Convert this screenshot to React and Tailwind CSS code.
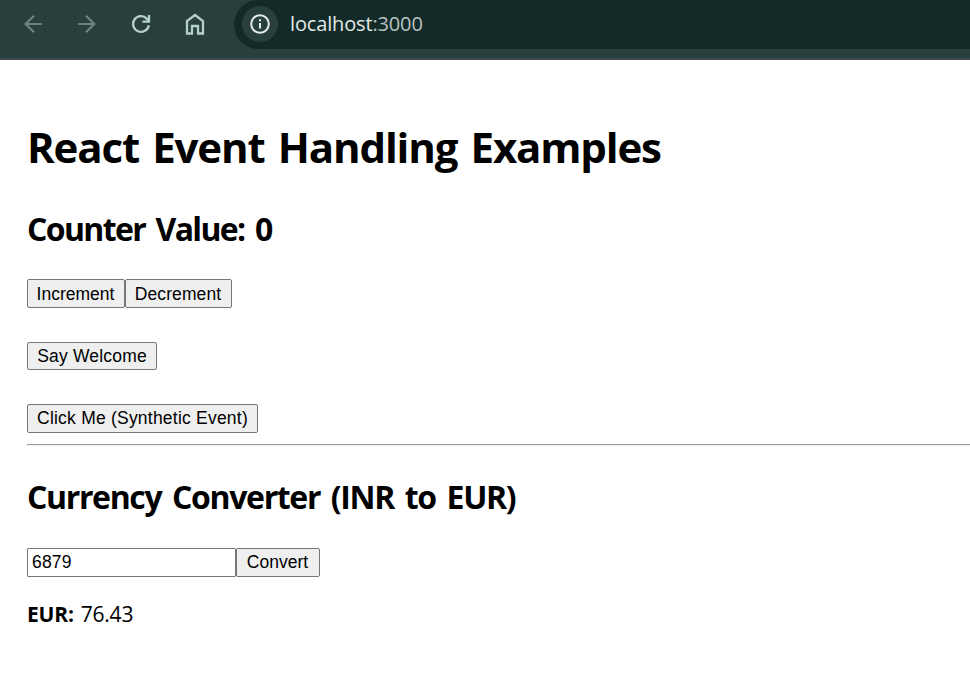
import { useState } from "react";

const buttonClass =
  "box-border flex items-center justify-center rounded-[2px] border border-[#767676] bg-[#efefef] font-['Liberation_Sans',Arial,sans-serif] text-[17.5px] leading-5 text-black whitespace-nowrap";

function BrowserBar() {
  return (
    <header className="flex h-[60px] items-start border-b-2 border-[#40494a] bg-[#28403d]">
      <nav className="flex h-12 w-[234px] shrink-0 items-center pl-[22px]">
        <svg className="mr-8 h-[22px] w-[22px]" viewBox="0 0 22 22" fill="none" stroke="#6d827e" strokeWidth="2.2">
          <path d="M20 11H3.5M12 2.7 3.7 11l8.3 8.3" />
        </svg>
        <svg className="mr-8 h-[22px] w-[22px]" viewBox="0 0 22 22" fill="none" stroke="#6d827e" strokeWidth="2.2">
          <path d="M2 11h16.5M10 2.7l8.3 8.3-8.3 8.3" />
        </svg>
        <svg className="mr-8 h-[22px] w-[22px]" viewBox="0 0 22 22" fill="none" stroke="#b5d0ca" strokeWidth="2.3">
          <path d="M18.8 12.2a7.9 7.9 0 1 1-2-6.6l2.4 2.6M19 2v6.6h-6.6" />
        </svg>
        <svg className="h-[22px] w-[22px]" viewBox="0 0 22 22" fill="none" stroke="#b5d0ca" strokeWidth="2.3">
          <path d="M3 20.5V8L11 2l8 6v12.5h-5V13H8v7.5z" />
        </svg>
      </nav>
      <div className="flex h-[49px] flex-1 items-center rounded-bl-[25px] rounded-tl-[25px] bg-[#122b28] pb-px pl-2">
        <div className="flex h-9 w-9 items-center justify-center rounded-full bg-[#28403d]">
          <svg className="h-[22px] w-[22px]" viewBox="0 0 22 22" fill="none" stroke="#e3ebe8" strokeWidth="2">
            <circle cx="11" cy="11" r="8.8" />
            <path d="M11 10v5.5M11 6.2v2.1" />
          </svg>
        </div>
        <div className="ml-3 pb-px font-['Open_Sans','Noto_Sans',sans-serif] text-[20px] leading-7 tracking-[-0.15px] text-[#e3e9e7]">
          localhost<span className="text-[#b9c3c0]">:3000</span>
        </div>
      </div>
    </header>
  );
}

export default function App() {
  const [count, setCount] = useState(0);
  const [amount, setAmount] = useState("6879");
  const [euros, setEuros] = useState("76.43");

  return (
    <div className="h-[681px] w-[970px] overflow-hidden bg-white font-['Open_Sans','Noto_Sans',sans-serif] text-black">
      <BrowserBar />
      <main className="pl-[27px]">
        <h1 className="mt-[59px] h-[57px] whitespace-nowrap text-[42px] leading-[56px] font-bold tracking-[-1.15px] [word-spacing:3.5px]">
          React Event Handling Examples
        </h1>
        <h2 className="mt-[32px] h-[42px] whitespace-nowrap text-[32px] leading-[42px] font-bold tracking-[-1.65px] [word-spacing:3.8px]">
          Counter Value: {count}
        </h2>
        <div className="mt-[29px] flex">
          <button className={`${buttonClass} h-[29px] w-[98px] pr-px`} onClick={() => setCount(count + 1)}>Increment</button>
          <button className={`${buttonClass} h-[29px] w-[107px] pr-px tracking-[0.1px]`} onClick={() => setCount(count - 1)}>Decrement</button>
        </div>
        <button className={`${buttonClass} mt-[34px] h-[28px] w-[130px] tracking-[0.18px]`}>Say Welcome</button>
        <button className={`${buttonClass} mt-[34px] h-[29px] w-[231px] pb-px tracking-[0.22px]`}>Click Me (Synthetic Event)</button>
        <hr className="mt-[11px] h-[2px] border-t border-b border-t-[#9a9a9a] border-b-[#eeeeee]" />
        <h2 className="mt-[30px] h-[42px] whitespace-nowrap text-[32px] leading-[42px] font-bold tracking-[-1.35px] [word-spacing:3.8px]">
          Currency Converter (INR to EUR)
        </h2>
        <div className="mt-[30px] flex">
          <input
            className="h-[29px] w-[209px] rounded-[1px] border border-[#767676] bg-white px-1 font-['Liberation_Sans',Arial,sans-serif] text-[17.5px] leading-5 tracking-[0.15px] text-black outline-none"
            value={amount}
            onChange={(event) => setAmount(event.target.value)}
          />
          <button className={`${buttonClass} h-[29px] w-[84px] pr-px pb-px`} onClick={() => setEuros((Number(amount) / 90).toFixed(2))}>Convert</button>
        </div>
        <p className="mt-[23px] text-[21px] leading-7 tracking-[-0.2px] [word-spacing:1.7px]">
          <strong>EUR:</strong> {euros}
        </p>
      </main>
    </div>
  );
}
